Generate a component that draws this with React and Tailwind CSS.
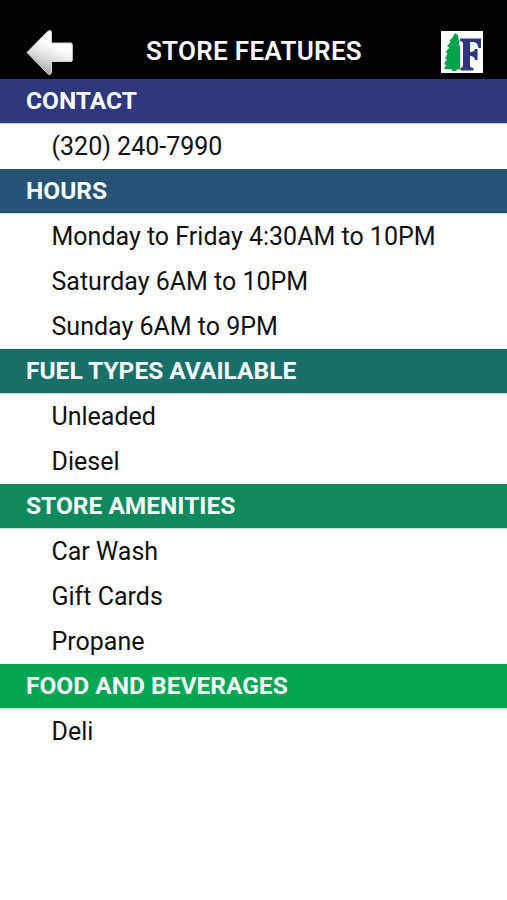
const sections = [
  {
    title: "CONTACT",
    color: "bg-[#31377f]",
    items: ["(320) 240-7990"],
  },
  {
    title: "HOURS",
    color: "bg-[#255375]",
    items: ["Monday to Friday 4:30AM to 10PM", "Saturday 6AM to 10PM", "Sunday 6AM to 9PM"],
  },
  {
    title: "FUEL TYPES AVAILABLE",
    color: "bg-[#1b6f69]",
    items: ["Unleaded", "Diesel"],
  },
  {
    title: "STORE AMENITIES",
    color: "bg-[#0f8a5d]",
    items: ["Car Wash", "Gift Cards", "Propane"],
  },
  {
    title: "FOOD AND BEVERAGES",
    color: "bg-[#02a551]",
    items: ["Deli"],
  },
];

const BackArrow = () => (
  <svg width="48" height="48" viewBox="0 0 48 48">
    <defs>
      <linearGradient id="arrowFill" x1="0.25" y1="0.9" x2="0.5" y2="0.3">
        <stop offset="0" stopColor="#a9a9a9" />
        <stop offset="0.5" stopColor="#dcdcdc" />
        <stop offset="1" stopColor="#ffffff" />
      </linearGradient>
    </defs>
    <path
      d="M2 24.5 L22.5 3.5 Q26.5 1 26.5 5 V15 H46 Q47.3 15 47.3 16.5 V32 Q47.3 33.5 46 33.5 H26.5 V44 Q26 48 22.5 45.5 Z"
      fill="url(#arrowFill)"
      stroke="#d0d0d0"
      strokeWidth="1"
      strokeLinejoin="round"
    />
  </svg>
);

const Logo = () => (
  <svg width="42" height="42" viewBox="0 0 42 42">
    <rect width="42" height="42" fill="#ffffff" />
    <path
      d="M14 2 L17 4 L17.5 8 L18.5 10 L18 13 L19 16 V38.5 H15.5 V40 H11 V38.5 L3 38 L5 34 L3 33 L6 28.5 L4 27.5 L6.5 22.5 L4.5 21 L8.5 16.5 L6 15 L9.5 11 L8.5 9.5 L11.5 6.5 Z"
      fill="#05a24d"
    />
    <path
      d="M19 7.5 H40 V17 H37.5 Q36.5 11 32.5 11 H29 V21 Q33.5 21 34 18 H36.5 V29 H34 Q33.5 25 29 25 V34.5 Q29 36.5 32.5 37 V39.5 H19.5 V37 Q22 36.5 22 34.5 V12.5 Q22 10.5 19 10 Z"
      fill="#2f3681"
    />
  </svg>
);

const Section = ({ title, color, items }) => (
  <section>
    <h2 className={`flex h-[45px] items-center border-b border-white/75 pt-px pl-[26px] text-[24.5px] font-bold text-[#f5fbfa] ${color}`}>
      {title}
    </h2>
    <ul>
      {items.map((item) => (
        <li key={item} className="flex h-[45px] items-center pl-[51.5px] text-[25px] whitespace-nowrap">
          {item}
        </li>
      ))}
    </ul>
  </section>
);

const App = () => (
  <main className="min-h-screen bg-white font-['Roboto',sans-serif] text-[#111111]">
    <header className="flex h-[79px] items-center justify-between bg-black pt-6 pr-6 pl-[25px]">
      <button type="button" aria-label="Back">
        <BackArrow />
      </button>
      <h1 className="mr-1.5 text-[26px] font-semibold tracking-[0.3px] whitespace-nowrap text-[#fafafa]">STORE FEATURES</h1>
      <Logo />
    </header>
    {sections.map((section) => (
      <Section key={section.title} {...section} />
    ))}
  </main>
);

export default App;
